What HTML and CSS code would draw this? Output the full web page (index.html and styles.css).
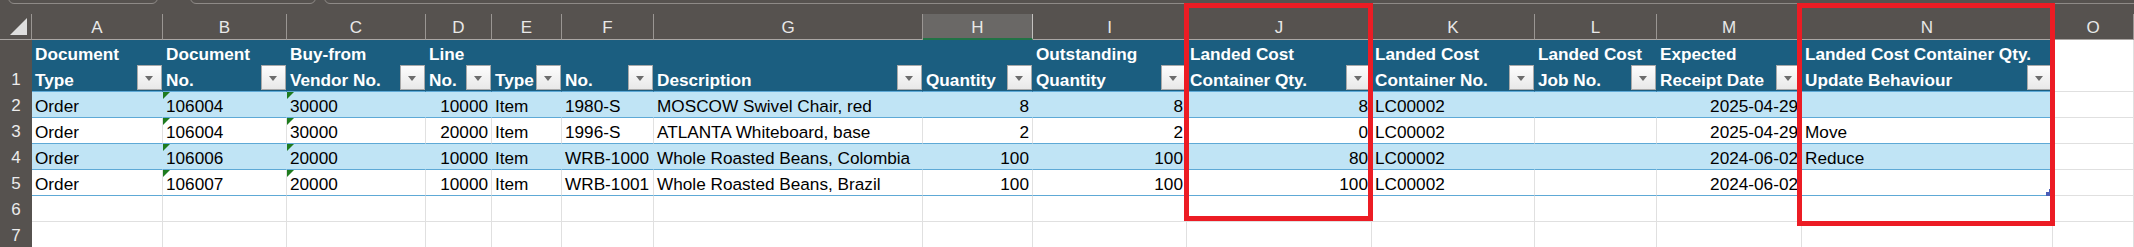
FILE: index.html
```html
<!DOCTYPE html>
<html lang="en">
<head>
<meta charset="utf-8">
<title>Sheet</title>
<link rel="stylesheet" href="styles.css">
</head>
<body>
<div class="sheet">
  <div class="topstrip"><span class="tab t1"></span><span class="tab t2"></span><span class="tab t3"></span></div>

  <div class="ch corner"><svg width="31" height="25" viewBox="0 0 31 25"><polygon points="27,4 27,21 10,21" fill="#dedede"/></svg></div>
  <div class="ch">A</div>
  <div class="ch">B</div>
  <div class="ch">C</div>
  <div class="ch">D</div>
  <div class="ch">E</div>
  <div class="ch">F</div>
  <div class="ch">G</div>
  <div class="ch sel">H</div>
  <div class="ch">I</div>
  <div class="ch">J</div>
  <div class="ch">K</div>
  <div class="ch">L</div>
  <div class="ch">M</div>
  <div class="ch">N</div>
  <div class="ch">O</div>

  <div class="rh rh1">1</div>
  <div class="th"><span class="lbl">Document<br>Type</span><span class="fb"></span></div>
  <div class="th"><span class="lbl">Document<br>No.</span><span class="fb"></span></div>
  <div class="th"><span class="lbl">Buy-from<br>Vendor No.</span><span class="fb"></span></div>
  <div class="th"><span class="lbl">Line<br>No.</span><span class="fb"></span></div>
  <div class="th"><span class="lbl">Type</span><span class="fb"></span></div>
  <div class="th"><span class="lbl">No.</span><span class="fb"></span></div>
  <div class="th"><span class="lbl">Description</span><span class="fb"></span></div>
  <div class="th"><span class="lbl">Quantity</span><span class="fb"></span></div>
  <div class="th"><span class="lbl">Outstanding<br>Quantity</span><span class="fb"></span></div>
  <div class="th"><span class="lbl">Landed Cost<br>Container Qty.</span><span class="fb"></span></div>
  <div class="th"><span class="lbl">Landed Cost<br>Container No.</span><span class="fb"></span></div>
  <div class="th"><span class="lbl">Landed Cost<br>Job No.</span><span class="fb"></span></div>
  <div class="th"><span class="lbl">Expected<br>Receipt Date</span><span class="fb"></span></div>
  <div class="th"><span class="lbl">Landed Cost Container Qty.<br>Update Behaviour</span><span class="fb"></span></div>
  <div class="gc"></div>

  <div class="rh">2</div>
  <div class="td b">Order</div>
  <div class="td b tn">106004</div>
  <div class="td b tn">30000</div>
  <div class="td b r">10000</div>
  <div class="td b">Item</div>
  <div class="td b">1980-S</div>
  <div class="td b">MOSCOW Swivel Chair, red</div>
  <div class="td b r">8</div>
  <div class="td b r">8</div>
  <div class="td b r">8</div>
  <div class="td b">LC00002</div>
  <div class="td b"></div>
  <div class="td b r">2025-04-29</div>
  <div class="td b"></div>
  <div class="gc"></div>

  <div class="rh">3</div>
  <div class="td">Order</div>
  <div class="td tn">106004</div>
  <div class="td tn">30000</div>
  <div class="td r">20000</div>
  <div class="td">Item</div>
  <div class="td">1996-S</div>
  <div class="td">ATLANTA Whiteboard, base</div>
  <div class="td r">2</div>
  <div class="td r">2</div>
  <div class="td r">0</div>
  <div class="td">LC00002</div>
  <div class="td"></div>
  <div class="td r">2025-04-29</div>
  <div class="td">Move</div>
  <div class="gc"></div>

  <div class="rh">4</div>
  <div class="td b">Order</div>
  <div class="td b tn">106006</div>
  <div class="td b tn">20000</div>
  <div class="td b r">10000</div>
  <div class="td b">Item</div>
  <div class="td b">WRB-1000</div>
  <div class="td b">Whole Roasted Beans, Colombia</div>
  <div class="td b r">100</div>
  <div class="td b r">100</div>
  <div class="td b r">80</div>
  <div class="td b">LC00002</div>
  <div class="td b"></div>
  <div class="td b r">2024-06-02</div>
  <div class="td b">Reduce</div>
  <div class="gc"></div>

  <div class="rh">5</div>
  <div class="td">Order</div>
  <div class="td tn">106007</div>
  <div class="td tn">20000</div>
  <div class="td r">10000</div>
  <div class="td">Item</div>
  <div class="td">WRB-1001</div>
  <div class="td">Whole Roasted Beans, Brazil</div>
  <div class="td r">100</div>
  <div class="td r">100</div>
  <div class="td r">100</div>
  <div class="td">LC00002</div>
  <div class="td"></div>
  <div class="td r">2024-06-02</div>
  <div class="td"><svg class="handle" width="6" height="7" viewBox="0 0 6 7"><rect x="3" y="0" width="3" height="3" fill="#4a5db6"/><rect x="0" y="3" width="6" height="4" fill="#4a5db6"/></svg></div>
  <div class="gc"></div>

  <div class="rh">6</div>
  <div class="gc"></div><div class="gc"></div><div class="gc"></div><div class="gc"></div><div class="gc"></div>
  <div class="gc"></div><div class="gc"></div><div class="gc"></div><div class="gc"></div><div class="gc"></div>
  <div class="gc"></div><div class="gc"></div><div class="gc"></div><div class="gc"></div><div class="gc"></div>

  <div class="rh">7</div>
  <div class="gc"></div><div class="gc"></div><div class="gc"></div><div class="gc"></div><div class="gc"></div>
  <div class="gc"></div><div class="gc"></div><div class="gc"></div><div class="gc"></div><div class="gc"></div>
  <div class="gc"></div><div class="gc"></div><div class="gc"></div><div class="gc"></div><div class="gc"></div>

  <div class="redbox rb-j"></div>
  <div class="redbox rb-n"></div>
</div>
</body>
</html>
```

FILE: styles.css
```css
html, body {
  margin: 0;
  padding: 0;
  background: #ffffff;
  overflow: hidden;
}

.sheet {
  position: relative;
  display: grid;
  grid-template-columns: 32px 131px 124px 139px 66px 70px 92px 269px 110px 154px 185px 163px 122px 145px 251px 1fr;
  grid-template-rows: 14px 26px 52px repeat(6, 26px);
  font-family: "Liberation Sans", Arial, sans-serif;
  width: 2134px;
  height: 247px;
  overflow: hidden;
}

.topstrip {
  grid-column: 1 / -1;
  background: #56524f;
  display: flex;
  overflow: hidden;
}

.tab {
  display: block;
  height: 12px;
  margin-top: -8px;
  box-sizing: border-box;
  border: 1px solid #8e8a87;
  border-radius: 7px;
}

.t1 { margin-left: 8px; width: 150px; }
.t2 { margin-left: 32px; width: 126px; }
.t3 { margin-left: 8px; flex: 1; margin-right: -12px; }

.ch {
  background: #56524f;
  color: #e8e8e8;
  font-size: 17px;
  text-align: center;
  line-height: 23px;
  padding-top: 2px;
  box-sizing: border-box;
  border-right: 1px solid #9a9693;
  border-bottom: 1px solid #aaa6a3;
}

.ch.corner {
  padding: 0;
}

.ch.corner svg {
  display: block;
}

.ch.sel {
  background: #6a6866;
  border-bottom: 2px solid #217346;
  border-right-color: #c4c2c0;
}

.rh {
  background: #56524f;
  color: #ececec;
  font-size: 17px;
  text-align: center;
  line-height: 22px;
  padding-top: 3px;
  box-sizing: border-box;
}

.rh1 {
  display: flex;
  flex-direction: column;
  justify-content: flex-end;
  padding-top: 0;
  padding-bottom: 1px;
}

.th {
  position: relative;
  background: #1b5e80;
  color: #ffffff;
  font-weight: bold;
  font-size: 17.2px;
  box-sizing: border-box;
  border-bottom: 1px solid #5ea9d6;
  border-right: 1px solid #1b5e80;
  padding: 0 3px;
  display: flex;
  flex-direction: column;
  justify-content: flex-end;
}

.lbl {
  display: block;
  line-height: 26px;
  margin-bottom: -2px;
  white-space: nowrap;
}

.fb {
  position: absolute;
  right: 0;
  bottom: 1px;
  width: 25px;
  height: 25px;
  box-sizing: border-box;
  border: 1px solid #a9a9a9;
  background: linear-gradient(#fdfdfd, #e8e8e8);
}

.fb::after {
  content: "";
  position: absolute;
  left: 7px;
  top: 10px;
  border-left: 4.5px solid transparent;
  border-right: 4.5px solid transparent;
  border-top: 5px solid #6c6c6c;
}

.td {
  position: relative;
  font-size: 17.2px;
  line-height: 22px;
  padding: 3px 3px 0;
  box-sizing: border-box;
  border-bottom: 1px solid #5ea9d6;
  border-right: 1px solid #e1e1e1;
  background: #ffffff;
  color: #000000;
  white-space: nowrap;
}

.td.b {
  background: #c0e4f5;
  border-right-color: #c0e4f5;
}

.td.r {
  text-align: right;
}

.td.tn::before {
  content: "";
  position: absolute;
  left: 0;
  top: 0;
  border-top: 7px solid #1e7b1e;
  border-right: 7px solid transparent;
}

.handle {
  position: absolute;
  right: 0;
  bottom: -1px;
  display: block;
}

.gc {
  background: #ffffff;
  box-sizing: border-box;
  border-right: 1px solid #e0e0e0;
  border-bottom: 1px solid #e0e0e0;
}

.redbox {
  position: absolute;
  box-sizing: border-box;
  border: 5px solid #ec1c24;
  pointer-events: none;
}

.rb-j {
  left: 1184px;
  top: 3px;
  width: 189px;
  height: 218px;
}

.rb-n {
  left: 1797px;
  top: 3px;
  width: 258px;
  height: 223px;
}
```
